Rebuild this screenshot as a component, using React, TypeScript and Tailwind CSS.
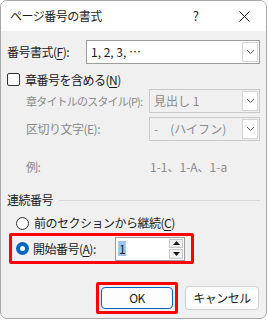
const font = { fontFamily: '"Noto Sans CJK JP", "Noto Sans", sans-serif' };

const Chevron = () => (
  <svg width="9" height="6" viewBox="0 0 9 6" fill="none">
    <path d="M1 1l3.5 3.5L8 1" stroke="#606060" strokeWidth="1" />
  </svg>
);

const Combo = ({ text, disabled, w }: { text: string; disabled?: boolean; w: string }) => (
  <div
    className={`flex h-[24px] shrink-0 ${w} items-stretch border tracking-normal ${
      disabled ? 'border-[#c8c8c8] bg-[#f0f0f0] text-[#8a8a8a]' : 'border-[#9c9c9c] bg-white text-[#1a1a1a]'
    }`}
  >
    <div className="flex flex-1 items-center whitespace-nowrap pl-[4px] text-[12px]">{text}</div>
    <div className="my-[1px] mr-[1px] flex w-[16px] items-center justify-center border border-[#d4d4d4] bg-white">
      <Chevron />
    </div>
  </div>
);

const U = ({ c }: { c: string }) => <span className="underline underline-offset-2">{c}</span>;

export default function App() {
  return (
    <div className="h-[320px] w-[268px] bg-white" style={font}>
      <div className="flex h-[319px] w-[267px] flex-col overflow-hidden rounded-[7px] border border-[#a8a8a8] bg-[#f0f0f0] text-[#1a1a1a]">
        {/* title bar */}
        <div className="flex h-[30px] shrink-0 items-center bg-white text-[12px] leading-[16px]">
          <span className="pl-[9px] tracking-[-0.5px]">ページ番号の書式</span>
          <span className="ml-auto mr-[40px] text-[13px]">?</span>
          <svg width="11" height="11" viewBox="0 0 11 11" className="mr-[16px]">
            <path d="M0.5 0.5l10 10M10.5 0.5l-10 10" stroke="#1a1a1a" strokeWidth="1" />
          </svg>
        </div>

        <div className="flex flex-col whitespace-nowrap px-[6px] text-[12px] leading-[16px] tracking-[-0.5px]">
          {/* format */}
          <div className="mt-[9px] flex items-center">
            <span className="w-[79px]">
              番号書式(<U c="F" />):
            </span>
            <Combo text="1, 2, 3, …" w="w-[174px]" />
          </div>

          {/* include chapter */}
          <div className="mt-[9px] flex h-[13px] items-center gap-[5px]">
            <div className="h-[13px] w-[13px] rounded-[2px] border border-[#333] bg-white" />
            <span>
              章番号を含める(<U c="N" />)
            </span>
          </div>

          <div className="mt-[3px] flex items-center pl-[19px] text-[#8a8a8a]">
            <span className="w-[123px] text-[11px] tracking-[-0.8px]">章タイトルのスタイル(P):</span>
            <Combo text="見出し 1" disabled w="w-[111px]" />
          </div>
          <div className="mt-[4px] flex items-center pl-[19px] text-[#8a8a8a]">
            <span className="w-[123px]">区切り文字(E):</span>
            <Combo text="-　(ハイフン)" disabled w="w-[111px]" />
          </div>
          <div className="mt-[18px] flex h-[16px] items-center pl-[19px] text-[#8a8a8a]">
            <span className="w-[124px]">例:</span>
            <span className="tracking-normal">1-1、1-A、1-a</span>
          </div>

          {/* group */}
          <div className="mt-[17px] flex h-[16px] items-center gap-[6px]">
            <span>連続番号</span>
            <div className="mt-[1px] h-px flex-1 bg-[#d8d8d8]" />
          </div>

          <div className="mt-[7px] flex h-[16px] items-center gap-[5px] pl-[9px]">
            <div className="h-[13px] w-[13px] rounded-full border border-[#333] bg-white" />
            <span>
              前のセクションから継続(<U c="C" />)
            </span>
          </div>

          <div className="ml-[2px] mt-[2px] flex h-[31px] w-[185px] items-center rounded-[2px] border-[3px] border-[#ff0000] pl-[4px]">
            <div className="flex h-[13px] w-[13px] items-center justify-center rounded-full bg-[#0067c0]">
              <div className="h-[5px] w-[5px] rounded-full bg-white" />
            </div>
            <span className="ml-[4px] w-[82px]">
              開始番号(<U c="A" />):
            </span>
            <div className="flex h-[24px] w-[70px] items-stretch border border-[#9c9c9c] bg-white">
              <div className="flex flex-1 items-center pl-[2px]">
                <span className="bg-[#99c9ef] px-[1px] leading-[15px]">1</span>
              </div>
              <div className="my-[1px] mr-[1px] flex w-[14px] flex-col gap-px">
                <div className="flex flex-1 items-center justify-center border border-[#c8c8c8] bg-[#f0f0f0]">
                  <svg width="7" height="4" viewBox="0 0 7 4">
                    <path d="M3.5 0L7 4H0z" fill="#1a1a1a" />
                  </svg>
                </div>
                <div className="flex flex-1 items-center justify-center border border-[#c8c8c8] bg-[#f0f0f0]">
                  <svg width="7" height="4" viewBox="0 0 7 4">
                    <path d="M0 0h7L3.5 4z" fill="#1a1a1a" />
                  </svg>
                </div>
              </div>
            </div>
          </div>

          {/* buttons */}
          <div className="mt-[18px] flex items-center justify-end gap-[7px] pr-[1px]">
            <div className="rounded-[2px] border-[3px] border-[#ff0000] p-[2px]">
              <button className="flex h-[22px] w-[72px] items-center justify-center rounded-[4px] border border-[#0067c0] bg-[#fdfdfd] text-[12px]">
                OK
              </button>
            </div>
            <button className="flex h-[24px] w-[74px] items-center justify-center rounded-[4px] border border-[#d0d0d0] bg-[#fdfdfd] text-[12px]">
              キャンセル
            </button>
          </div>
        </div>
      </div>
    </div>
  );
}
